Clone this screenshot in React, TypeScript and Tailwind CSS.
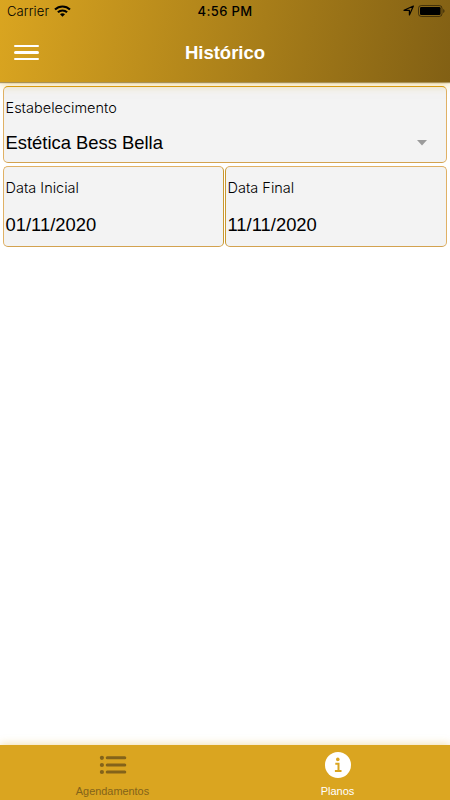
import type { ReactNode } from 'react'

function StatusBar() {
  return (
    <div className="grid h-[23px] grid-cols-3 items-center px-[7px] font-['Inter',sans-serif] text-[13px] leading-[23px] text-black">
      <div className="flex items-center gap-[5px]">
        <span className="w-[42px] font-light tracking-[0.1px]">Carrier</span>
        <svg className="-mt-[1px]" width="17" height="12" viewBox="0 0 17 12" fill="none" stroke="currentColor" strokeWidth="2.1">
          <path d="M1 4.5C5.2.4 11.8.4 16 4.5" />
          <path d="M3.9 7.3c2.6-2.5 6.6-2.5 9.2 0" />
          <path d="M6 9.2c1.4-1.4 3.6-1.4 5 0L8.5 11.7z" fill="currentColor" stroke="none" />
        </svg>
      </div>
      <span className="text-center font-medium tracking-[0.35px]">4:56 PM</span>
      <div className="-mr-[2px] -mt-[2px] flex items-center justify-end gap-[3px]">
        <svg width="12" height="11" viewBox="0 0 12 11" fill="none" stroke="currentColor" strokeWidth="1.2" strokeLinejoin="round">
          <path d="M1 5.3L10.4 1 6.4 10V5.4z" />
        </svg>
        <svg width="27" height="12" viewBox="0 0 27 12">
          <rect x="0.5" y="0.5" width="23.5" height="11" rx="2.8" fill="none" stroke="#000" strokeOpacity="0.5" />
          <rect x="2" y="2" width="20.5" height="8" rx="1.2" />
          <path d="M25.3 4v4c1.6-.6 1.6-3.4 0-4z" fillOpacity="0.6" />
        </svg>
      </div>
    </div>
  )
}

function Header() {
  return (
    <header className="z-10 h-[82px] shrink-0 bg-[linear-gradient(100deg,#daa520_0%,#826014_100%)] shadow-[0_1px_1px_rgba(120,90,20,0.6),0_2px_10px_rgba(218,165,32,0.5)]">
      <StatusBar />
      <div className="grid h-[59px] grid-cols-3 items-center px-[14px]">
        <button aria-label="Menu" className="flex w-[25px] flex-col gap-[4px]">
          <span className="h-[2.4px] rounded-full bg-white" />
          <span className="h-[2.4px] rounded-full bg-white" />
          <span className="h-[2.4px] rounded-full bg-white" />
        </button>
        <h1 className="text-center text-[18.5px] font-bold text-white">Histórico</h1>
      </div>
    </header>
  )
}

function Field({ label, value, className, children }: { label: string; value: string; className: string; children?: ReactNode }) {
  return (
    <div className={`rounded-[5px] border border-[#e0b165] border-b-[#d3a24f] bg-[#f3f3f3] pl-[1.5px] ${className}`}>
      <div className="pt-[11px] font-['Inter',sans-serif] text-[14.5px] font-light leading-[20px] text-black">{label}</div>
      <div className="flex items-center justify-between pr-[19px]">
        <span className="text-[18.4px] leading-[24px] text-black">{value}</span>
        {children}
      </div>
    </div>
  )
}

function TabBar() {
  return (
    <nav className="grid h-[55px] shrink-0 grid-cols-2 bg-[#daa520] text-[11px] shadow-[0_-1px_8px_rgba(218,165,32,0.35)]">
      <button className="flex flex-col items-center pt-[7px] text-[#83631a]">
        <svg width="28" height="25" viewBox="0 0 28 25" fill="none" stroke="currentColor" strokeLinecap="round">
          <path d="M8.2 5.8h17.6M8.2 13h17.6M8.2 20h17.6" strokeWidth="3" />
          <path d="M2.9 5.8h.01M2.9 13h.01M2.9 20h.01" strokeWidth="4.2" />
        </svg>
        <span className="mt-[7px] text-[10.9px] leading-[14px]">Agendamentos</span>
      </button>
      <button className="flex flex-col items-center pt-[7px] text-white">
        <svg width="26" height="26" viewBox="0 0 26 26">
          <circle cx="13" cy="13" r="13" fill="currentColor" />
          <circle cx="12.8" cy="7.4" r="1.8" fill="#daa520" />
          <path d="M10.3 11.8h3.2v7.1M9.9 19h6.6" fill="none" stroke="#daa520" strokeWidth="2" />
        </svg>
        <span className="mt-[6px] leading-[14px]">Planos</span>
      </button>
    </nav>
  )
}

export default function App() {
  return (
    <div className="flex h-[800px] w-[450px] flex-col overflow-hidden bg-white font-['Liberation_Sans',sans-serif]">
      <Header />
      <main className="flex flex-1 flex-col gap-[3px] px-[3px] pt-[4px]">
        <Field
          label="Estabelecimento"
          value="Estética Bess Bella"
          className="h-[77px] border-t-[#d99a0c] [&>div:last-child]:mt-[13px]"
        >
          <svg width="10" height="6" viewBox="0 0 10 6" fill="#9b9b9b">
            <path d="M0 0h10L5 5.5z" />
          </svg>
        </Field>
        <div className="grid grid-cols-[221px_222px] gap-[1px]">
          <Field label="Data Inicial" value="01/11/2020" className="h-[81px] border-r-[#c9982f] [&>div:last-child]:mt-[15px]" />
          <Field label="Data Final" value="11/11/2020" className="h-[81px] border-l-[#c9982f] [&>div:last-child]:mt-[15px]" />
        </div>
      </main>
      <TabBar />
    </div>
  )
}
